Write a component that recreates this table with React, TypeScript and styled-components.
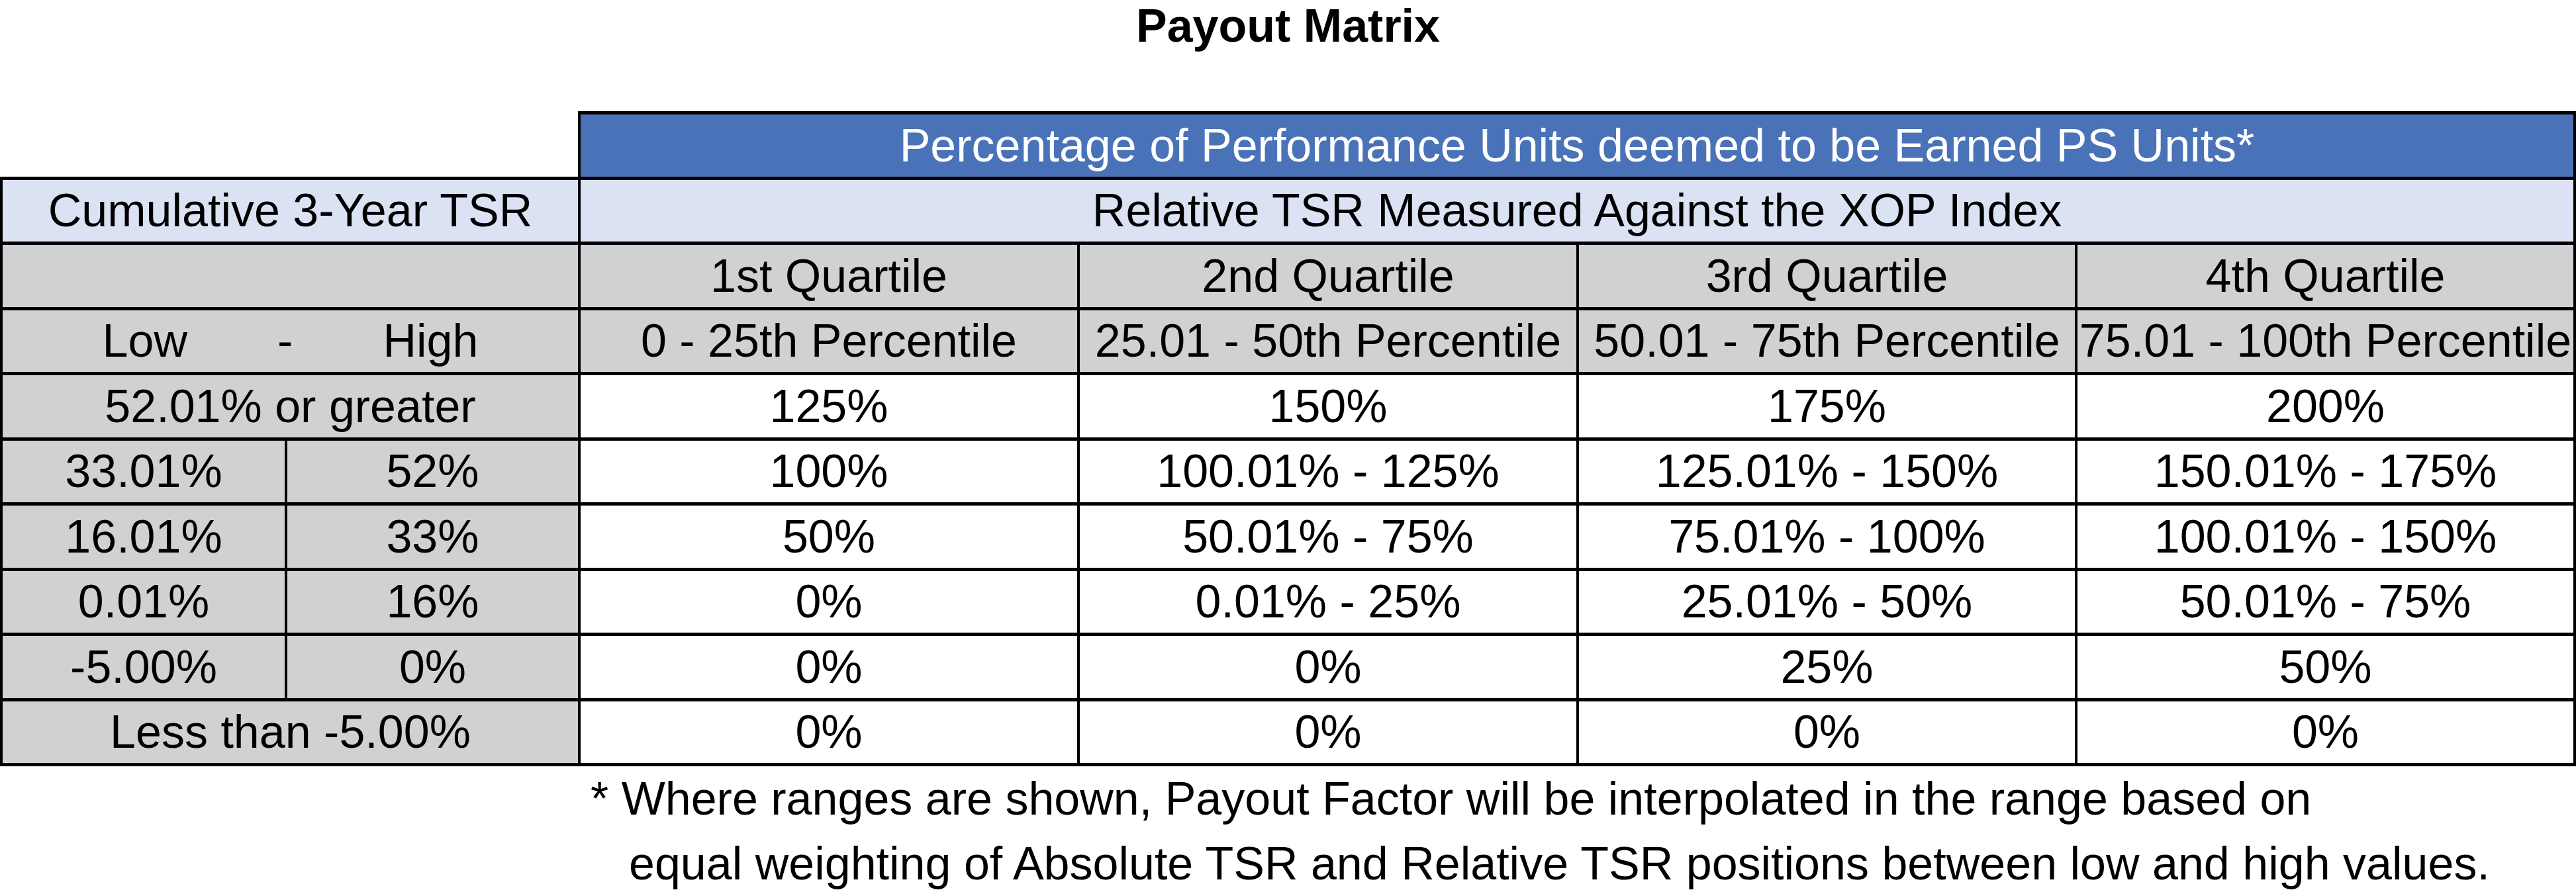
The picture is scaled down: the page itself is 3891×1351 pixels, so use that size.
import styled, { createGlobalStyle } from 'styled-components'

// Payout matrix: one title, one bordered table, a two-line footnote.
const Global = createGlobalStyle`
  html, body { margin: 0; padding: 0; background: #fff; }
  body { font-family: "Liberation Sans", Arial, sans-serif; color: #000; }
`

const Page = styled.div`
  width: 3891px;
  height: 1351px;
  display: flex;
  flex-direction: column;
  overflow: hidden;
`

const Title = styled.h1`
  margin: 0 0 90px;
  font-size: 70px;
  line-height: 78px;
  font-weight: 700;
  text-align: center;
`

const Matrix = styled.table`
  border-collapse: collapse;
  table-layout: fixed;
  width: 3887px;
  font-size: 70px;
`

type Tone = 'none' | 'blue' | 'light' | 'gray' | 'white'

const bg: Record<Tone, string> = {
  none: '#fff',
  blue: '#4a72b8',
  light: '#dae2f3',
  gray: '#d0d1d3',
  white: '#fff',
}

const Cell = styled.td<{ $tone: Tone }>`
  height: 93.5px;
  padding: 0;
  text-align: center;
  vertical-align: middle;
  white-space: pre;
  line-height: 80px;
  background: ${({ $tone }) => bg[$tone]};
  color: ${({ $tone }) => ($tone === 'blue' ? '#fff' : '#000')};
  border-top: ${({ $tone }) => ($tone === 'none' ? 'none' : '5px solid #000')};
  border-bottom: 5px solid #000;
  border-left: ${({ $tone }) => ($tone === 'none' ? 'none' : '4px solid #000')};
  border-right: 4px solid #000;
`

const Note = styled.div`
  margin-left: 892px;
  font-size: 70px;
  line-height: 98px;
`

const NoteLine = styled.div<{ $indent?: number }>`
  padding-left: ${({ $indent }) => $indent ?? 0}px;
  white-space: nowrap;
`

const quartiles = ['1st Quartile', '2nd Quartile', '3rd Quartile', '4th Quartile']
const percentiles = [
  '0 - 25th Percentile',
  '25.01 - 50th Percentile',
  '50.01 - 75th Percentile',
  '75.01 - 100th Percentile',
]

type Row = { low: string; high?: string; values: string[] }

const rows: Row[] = [
  { low: '52.01% or greater', values: ['125%', '150%', '175%', '200%'] },
  { low: '33.01%', high: '52%', values: ['100%', '100.01% - 125%', '125.01% - 150%', '150.01% - 175%'] },
  { low: '16.01%', high: '33%', values: ['50%', '50.01% - 75%', '75.01% - 100%', '100.01% - 150%'] },
  { low: '0.01%', high: '16%', values: ['0%', '0.01% - 25%', '25.01% - 50%', '50.01% - 75%'] },
  { low: '-5.00%', high: '0%', values: ['0%', '0%', '25%', '50%'] },
  { low: 'Less than -5.00%', values: ['0%', '0%', '0%', '0%'] },
]

export default function App() {
  return (
    <Page>
      <Global />
      <Title>Payout Matrix</Title>
      <Matrix>
        <colgroup>
          <col style={{ width: 430 }} />
          <col style={{ width: 443 }} />
          <col style={{ width: 754 }} />
          <col style={{ width: 754 }} />
          <col style={{ width: 753 }} />
          <col style={{ width: 753 }} />
        </colgroup>
        <tbody>
          <tr>
            <Cell $tone="none" colSpan={2} />
            <Cell $tone="blue" colSpan={4}>Percentage of Performance Units deemed to be Earned PS Units*</Cell>
          </tr>
          <tr>
            <Cell $tone="light" colSpan={2}>Cumulative 3-Year TSR</Cell>
            <Cell $tone="light" colSpan={4}>Relative TSR Measured Against the XOP Index</Cell>
          </tr>
          <tr>
            <Cell $tone="gray" colSpan={2} />
            {quartiles.map(q => <Cell key={q} $tone="gray">{q}</Cell>)}
          </tr>
          <tr>
            <Cell $tone="gray" colSpan={2}>{'Low       -       High'}</Cell>
            {percentiles.map(p => <Cell key={p} $tone="gray">{p}</Cell>)}
          </tr>
          {rows.map(r => (
            <tr key={r.low}>
              {r.high ? (
                <>
                  <Cell $tone="gray">{r.low}</Cell>
                  <Cell $tone="gray">{r.high}</Cell>
                </>
              ) : (
                <Cell $tone="gray" colSpan={2}>{r.low}</Cell>
              )}
              {r.values.map((v, i) => <Cell key={i} $tone="white">{v}</Cell>)}
            </tr>
          ))}
        </tbody>
      </Matrix>
      <Note>
        <NoteLine>* Where ranges are shown, Payout Factor will be interpolated in the range based on</NoteLine>
        <NoteLine $indent={58}>equal weighting of Absolute TSR and Relative TSR positions between low and high values.</NoteLine>
      </Note>
    </Page>
  )
}
